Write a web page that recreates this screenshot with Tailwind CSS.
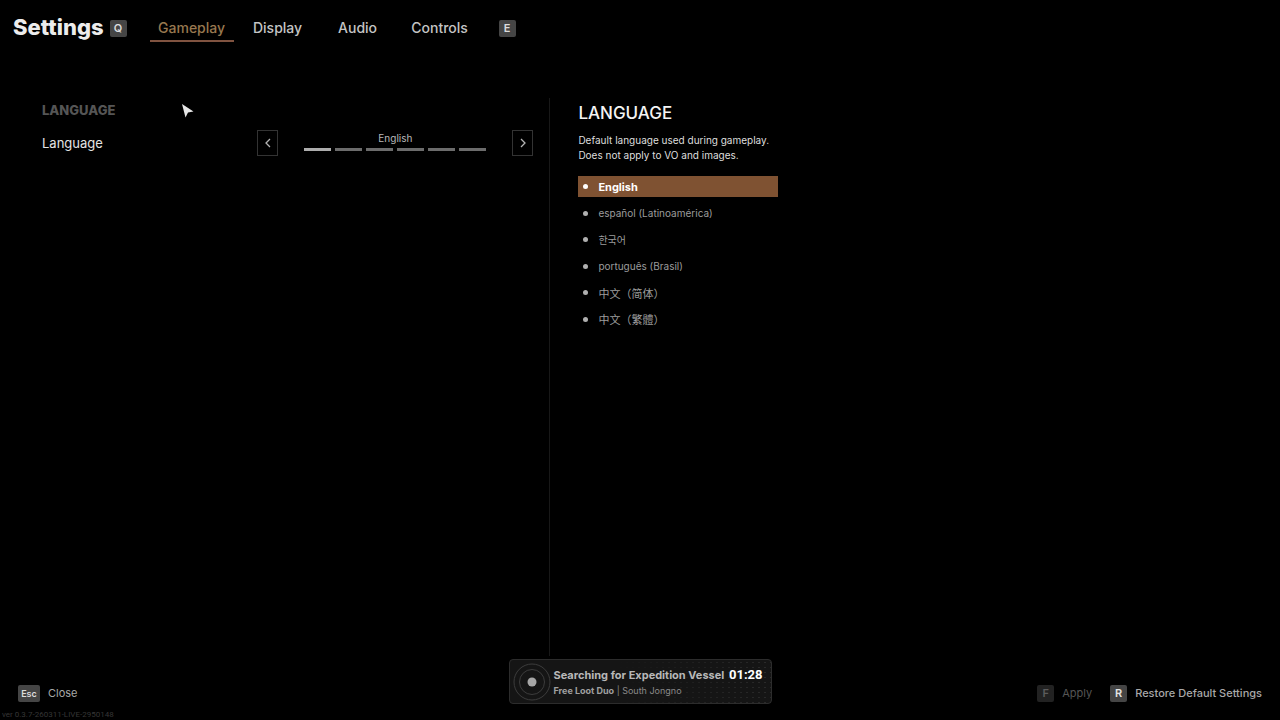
<!DOCTYPE html>
<html lang="en">
<head>
  <meta charset="UTF-8" />
  <meta name="viewport" content="width=device-width, initial-scale=1.0" />
  <title>Settings</title>
  <script src="https://cdn.jsdelivr.net/npm/@tailwindcss/browser@4"></script>
</head>
<body class="bg-black text-[#c4c4c4] font-[Inter,'Noto_Sans_CJK_SC',sans-serif] min-h-screen flex flex-col">

  <header class="flex items-center h-14 pl-[13px]">
    <h1 class="pb-[2px] text-[22px] leading-7 font-extrabold text-[#ececec]">Settings</h1>
    <button class="ml-[6px] size-[17px] rounded-xs bg-[#454545] text-[11px] leading-4 font-semibold text-[#dcdcdc]">Q</button>
    <nav class="ml-[23px] flex text-sm font-medium text-center">
      <a href="#gameplay" class="w-[84px] mr-1 pt-1 pb-[2px] border-b-2 border-[#805340] text-[#98784f]">Gameplay</a>
      <a href="#display" class="w-20 pt-1 pb-[2px] border-b-2 border-transparent">Display</a>
      <a href="#audio" class="w-20 pt-1 pb-[2px] border-b-2 border-transparent">Audio</a>
      <a href="#controls" class="w-[84px] pt-1 pb-[2px] border-b-2 border-transparent">Controls</a>
    </nav>
    <button class="ml-[17px] size-[17px] rounded-xs bg-[#454545] text-[11px] leading-4 font-semibold text-[#dcdcdc]">E</button>
  </header>

  <main class="flex-1 flex mt-[42px]">
    <section class="w-[43%] border-r border-[#181818] pl-[42px] pr-4">
      <h2 class="mt-1 text-[13px] leading-4 font-extrabold text-[#555]">LANGUAGE</h2>
      <div class="mt-3 flex items-center justify-between">
        <span id="language-label" class="text-[13px] leading-5 text-[#e4e4e4]">Language</span>
        <div class="flex items-center gap-[26px]" role="group" aria-labelledby="language-label">
          <button aria-label="Previous" class="w-[21px] h-[26px] border border-[#333] flex items-center justify-center">
            <svg class="w-[6px] h-[10px]" viewBox="0 0 6 10" fill="none" stroke="#b4b4b4" stroke-width="1.3"><path d="M5 1 1 5l4 4" /></svg>
          </button>
          <div class="w-[182px] pb-[5px]">
            <p class="text-[10px] leading-4 text-center text-[#b8b8b8]">English</p>
            <div class="mt-[2px] grid grid-cols-6 gap-1">
              <span class="h-[3px] bg-[#adadad]"></span>
              <span class="h-[3px] bg-[#6c6c6c]"></span>
              <span class="h-[3px] bg-[#6c6c6c]"></span>
              <span class="h-[3px] bg-[#6c6c6c]"></span>
              <span class="h-[3px] bg-[#6c6c6c]"></span>
              <span class="h-[3px] bg-[#6c6c6c]"></span>
            </div>
          </div>
          <button aria-label="Next" class="w-[21px] h-[26px] border border-[#333] flex items-center justify-center">
            <svg class="w-[6px] h-[10px]" viewBox="0 0 6 10" fill="none" stroke="#b4b4b4" stroke-width="1.3"><path d="m1 1 4 4-4 4" /></svg>
          </button>
        </div>
      </div>
    </section>

    <section class="flex-1 pl-7">
      <h2 class="mt-[5px] text-[17px] leading-5 font-medium text-[#f4f4f4]">LANGUAGE</h2>
      <p class="mt-[10px] text-[10px] leading-[15px] text-[#dedede]">Default language used during gameplay.<br />Does not apply to VO and images.</p>
      <ul class="mt-[13px] w-[200px] h-[154px] flex flex-col justify-between text-[10px] leading-4 text-[#9c9c9c]">
        <li class="flex items-center gap-[10px] h-[21px] pl-[5px] bg-[#7f5232] text-white text-[11px] font-bold"><span class="size-[5px] rounded-full bg-white"></span>English</li>
        <li class="flex items-center gap-[10px] h-[21px] pl-[5px]"><span class="size-[5px] rounded-full bg-[#b0b0b0]"></span>español (Latinoamérica)</li>
        <li class="flex items-center gap-[10px] h-[21px] pl-[5px]"><span class="size-[5px] rounded-full bg-[#b0b0b0]"></span><span lang="ko" class="font-['Noto_Sans_CJK_KR',sans-serif]">한국어</span></li>
        <li class="flex items-center gap-[10px] h-[21px] pl-[5px]"><span class="size-[5px] rounded-full bg-[#b0b0b0]"></span>português (Brasil)</li>
        <li class="flex items-center gap-[10px] h-[21px] pl-[5px]"><span class="size-[5px] rounded-full bg-[#b0b0b0]"></span><span lang="zh-Hans" class="text-[11px] font-['Noto_Sans_CJK_SC',sans-serif]">中文（简体）</span></li>
        <li class="flex items-center gap-[10px] h-[21px] pl-[5px]"><span class="size-[5px] rounded-full bg-[#b0b0b0]"></span><span lang="zh-Hant" class="text-[11px] font-['Noto_Sans_CJK_TC',sans-serif]">中文（繁體）</span></li>
      </ul>
    </section>
  </main>

  <footer>
    <div class="mt-[3px] grid grid-cols-[1fr_auto_1fr] items-end px-[18px] text-[11px] leading-[17px]">
      <button class="mb-[2px] flex items-center gap-2 text-[#a8a8a8] justify-self-start">
        <kbd class="w-[22px] rounded-xs bg-[#454545] font-[Inter,sans-serif] text-[9px] leading-[17px] font-semibold text-[#dcdcdc]">Esc</kbd>Close
      </button>

      <!-- matchmaking status -->
      <div class="w-[263px] h-[45px] rounded-sm border border-[#2c2c2c] bg-[#151515] bg-[linear-gradient(to_right,#151515_40%,transparent),radial-gradient(circle,#2a2a2a_1px,transparent_1px)] bg-size-[100%_100%,6px_5px] flex items-center pl-[3px] pr-2">
        <svg class="size-[38px] shrink-0" viewBox="0 0 38 38" fill="none" stroke="#3c3c3c">
          <circle cx="19" cy="19" r="18" />
          <circle cx="19" cy="19" r="12.5" />
          <circle cx="19" cy="19" r="4.5" fill="#a6a6a6" stroke="none" />
        </svg>
        <div class="ml-[3px] pt-[2px] flex-1">
          <p class="flex items-center justify-between leading-4 font-bold text-[#b8b8b8] whitespace-nowrap">Searching for Expedition Vessel <span class="font-[Roboto,sans-serif] text-[13px] font-bold text-white">01:28</span></p>
          <p class="text-[9px] leading-4 text-[#8a8a8a]"><b class="font-bold text-[#a0a0a0]">Free Loot Duo</b> | South Jongno</p>
        </div>
      </div>

      <div class="mb-[2px] flex justify-end gap-[18px] text-[#a8a8a8]">
        <button disabled class="flex items-center gap-2 text-[#555]">
          <kbd class="w-[17px] rounded-xs bg-[#222] font-[Inter,sans-serif] text-[11px] leading-[17px] font-semibold text-[#5c5c5c]">F</kbd>Apply
        </button>
        <button class="flex items-center gap-2 font-medium">
          <kbd class="w-[17px] rounded-xs bg-[#454545] font-[Inter,sans-serif] text-[11px] leading-[17px] font-semibold text-[#e4e4e4]">R</kbd>Restore Default Settings
        </button>
      </div>
    </div>
    <p class="mt-[6px] pl-[2px] text-[8px] leading-[10px] font-[Roboto,sans-serif] text-[#363636]">ver 0.3.7-260311-LIVE-2950148</p>
  </footer>

  <!-- cursor -->
  <svg class="absolute left-[182px] top-[104px] w-3 h-[14px]" viewBox="0 0 12 14" aria-hidden="true"><path d="M0 0 11.5 7.5 6 8.5 3.5 13.5Z" fill="#e6e6e6" /></svg>
</body>
</html>
